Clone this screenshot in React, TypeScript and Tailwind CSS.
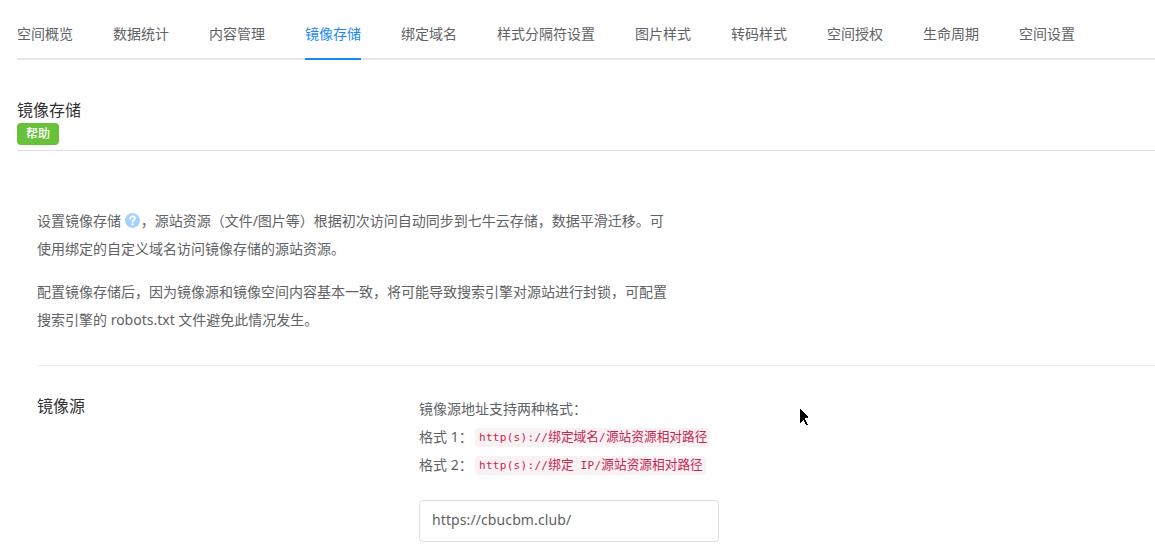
import { useState } from "react";
import type { ReactNode } from "react";
import clsx from "clsx";

const TABS = [
  "空间概览",
  "数据统计",
  "内容管理",
  "镜像存储",
  "绑定域名",
  "样式分隔符设置",
  "图片样式",
  "转码样式",
  "空间授权",
  "生命周期",
  "空间设置",
];

function TabBar({ active, onChange }: { active: string; onChange: (tab: string) => void }) {
  return (
    <nav className="flex h-[60px] gap-10 border-b-2 border-[#e4e7ed]">
      {TABS.map((tab) => (
        <button
          key={tab}
          onClick={() => onChange(tab)}
          className={clsx(
            "-mb-0.5 h-[60px] shrink-0 whitespace-nowrap border-b-2 pt-2.5 text-sm",
            tab === active ? "border-[#1989fa] text-[#1989fa]" : "border-transparent text-[#606266]"
          )}
        >
          {tab}
        </button>
      ))}
    </nav>
  );
}

function HelpIcon() {
  return (
    <svg className="mr-px inline-block h-[15px] w-[15px] align-[-2px]" viewBox="0 0 14 14" fill="none">
      <circle cx="7" cy="7" r="6.9" fill="#a3d0fd" />
      <path
        d="M4.8 5.4C4.8 4.1 5.7 3.3 7 3.3s2.2.8 2.2 1.9c0 1.5-2.1 1.5-2.1 3"
        stroke="#fff"
        strokeWidth="1.8"
        strokeLinecap="round"
      />
      <circle cx="7.1" cy="10.6" r="1.1" fill="#fff" />
    </svg>
  );
}

function Code({ children }: { children: ReactNode }) {
  return (
    <code className="ml-[7px] block h-[19px] whitespace-pre rounded bg-[#f9f2f4] pl-1 pr-[3px] font-['DejaVu_Sans_Mono','Noto_Sans_CJK_SC',monospace] text-[11px] leading-5 tracking-[0.3px] text-[#c7254e]">
      {children}
    </code>
  );
}

function Cjk({ children }: { children: ReactNode }) {
  return (
    <span className="font-['Noto_Sans_CJK_SC',sans-serif] text-[12.7px] leading-none tracking-normal">{children}</span>
  );
}

function Cursor() {
  return (
    <svg className="absolute left-[800px] top-[409px] h-[17px] w-2.5" viewBox="0 0 10 17" shapeRendering="crispEdges">
      <path d="M0 0l8 8v1H5v2h1v2h1v2h1v1H6v-1H5v-2H4v-2H3v1H2v1H1v1H0z" fill="#000" />
    </svg>
  );
}

export default function App() {
  const [tab, setTab] = useState("镜像存储");
  const [source, setSource] = useState("https://cbucbm.club/");

  return (
    <div className="relative h-[551px] w-full overflow-hidden bg-white pl-[17px] font-['Noto_Sans','Noto_Sans_CJK_SC',sans-serif] text-sm font-[375] text-[#606266]">
      <TabBar active={tab} onChange={setTab} />

      {/* Title */}
      <header className="flex h-[91px] flex-col items-start border-b border-[#dcdfe6] pt-[38px]">
        <h1 className="h-[25px] text-base leading-[25px] font-[375] text-[#303133]">镜像存储</h1>
        <button className="flex h-[22px] w-[42px] items-center justify-center rounded bg-[#67c23a] text-xs font-medium text-white">
          帮助
        </button>
      </header>

      <main className="ml-5 pt-14">
        {/* Description */}
        <section className="flex flex-col gap-[15px] whitespace-nowrap leading-7">
          <p>
            设置镜像存储 <HelpIcon />，源站资源（文件/图片等）根据初次访问自动同步到七牛云存储，数据平滑迁移。可
            <br />
            使用绑定的自定义域名访问镜像存储的源站资源。
          </p>
          <p>
            配置镜像存储后，因为镜像源和镜像空间内容基本一致，将可能导致搜索引擎对源站进行封锁，可配置
            <br />
            搜索引擎的 robots.txt 文件避免此情况发生。
          </p>
        </section>

        {/* Mirror source */}
        <section className="mt-[31px] flex border-t border-[#ebeef0] pt-7">
          <h2 className="w-[382px] text-base leading-6 font-[375] text-[#303133]">镜像源</h2>
          <div className="mt-px leading-7">
            <p>镜像源地址支持两种格式：</p>
            <p className="flex items-center">
              <span className="w-[49px] whitespace-nowrap">格式 1：</span>
              <Code>
                http(s)://<Cjk>绑定域名</Cjk>/<Cjk>源站资源相对路径</Cjk>
              </Code>
            </p>
            <p className="flex items-center">
              <span className="w-[49px] whitespace-nowrap">格式 2：</span>
              <Code>
                http(s)://<Cjk>绑定</Cjk> IP/<Cjk>源站资源相对路径</Cjk>
              </Code>
            </p>
            <input
              value={source}
              onChange={(e) => setSource(e.target.value)}
              className="mt-[21px] block h-[42px] w-[300px] rounded border border-[#dcdfe6] px-3 pb-[3px] text-sm tracking-[0.1px] text-[#606266] outline-none"
            />
          </div>
        </section>
      </main>

      <Cursor />
    </div>
  );
}
